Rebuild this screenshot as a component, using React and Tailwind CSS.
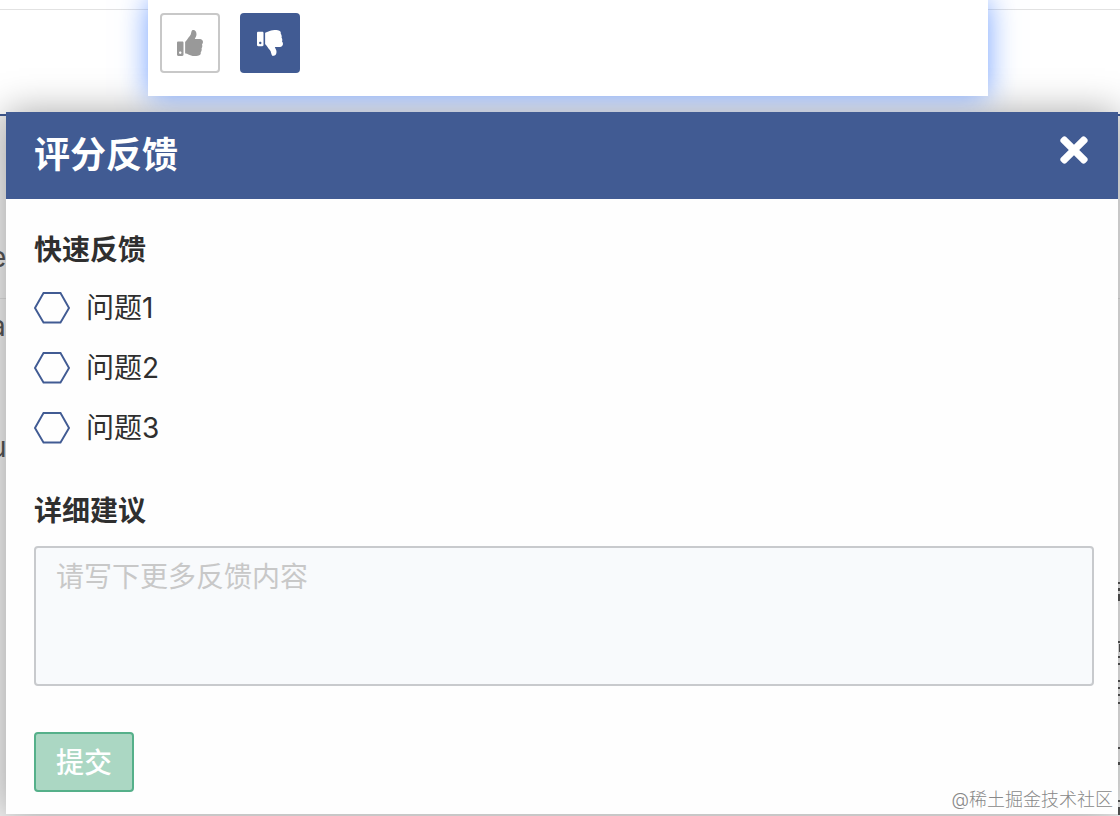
import React, { useState } from 'react';
import { FaThumbsUp, FaThumbsDown, FaTimes } from 'react-icons/fa';

const questions = [
    { id: 'q1', label: '问题1' },
    { id: 'q2', label: '问题2' },
    { id: 'q3', label: '问题3' },
];

function RatingBar() {
    return (
        <section className="relative z-10 ml-[148px] mr-[132px] flex gap-5 bg-white pl-3 pt-[13px] pb-[23px] shadow-[0_0_28px_rgba(70,130,255,0.75)]">
            <button type="button" aria-label="赞" className="flex h-[60px] w-[60px] items-center justify-center rounded border-2 border-[#c8c8c8] bg-white text-[#999]">
                <FaThumbsUp className="h-[26px] w-[26px]" />
            </button>
            <button type="button" aria-label="踩" className="flex h-[60px] w-[60px] items-center justify-center rounded bg-[#415b93] text-white">
                <FaThumbsDown className="h-[26px] w-[26px]" />
            </button>
        </section>
    );
}

function HexOption({ id, label }) {
    return (
        <label htmlFor={id} className="relative flex cursor-pointer items-center gap-4 leading-10">
            <input id={id} type="checkbox" className="peer absolute h-9 w-9 cursor-pointer opacity-0" />
            <svg viewBox="0 0 36 32" className="h-8 w-9 fill-none stroke-[#415b93] peer-checked:fill-[#415b93]">
                <path d="M9.5 1h17L35 16l-8.5 14.5h-17L1 16z" strokeWidth="1.9" />
            </svg>
            <span>{label}</span>
        </label>
    );
}

function FeedbackDialog() {
    const [detail, setDetail] = useState('');

    return (
        <section role="dialog" aria-labelledby="dialog-title" className="ml-1.5 mr-0.5 bg-[#fefefe] shadow-[0_0_36px_rgba(0,0,0,0.35)]">
            <header className="relative z-20 flex items-start justify-between bg-[#415b93] px-7 pt-[19px] pb-5 text-white">
                <h1 id="dialog-title" className="text-4xl leading-[48px] font-bold">评分反馈</h1>
                <button type="button" aria-label="关闭" className="-mt-px flex h-10 w-8 items-center justify-center">
                    <FaTimes className="h-10 w-7" />
                </button>
            </header>
            <form className="pl-7 pr-6 pt-[31px] pb-[22px] text-[28px] text-[#2f2f2f]" onSubmit={(e) => e.preventDefault()}>
                <h2 className="leading-10 font-bold">快速反馈</h2>
                <div className="mt-[18px] flex flex-col gap-5">
                    {questions.map(q => (
                        <HexOption key={q.id} id={q.id} label={q.label} />
                    ))}
                </div>
                <label htmlFor="detail" className="mt-[43px] block leading-10 font-bold">详细建议</label>
                <textarea
                    id="detail"
                    value={detail}
                    onChange={(e) => setDetail(e.target.value)}
                    placeholder="请写下更多反馈内容"
                    className="mt-[15px] block h-[140px] w-full resize-none rounded border-2 border-[#c8cacd] bg-[#f8fafc] px-5 py-[9px] leading-10 placeholder:text-[#c8c8c8]"
                />
                <button type="submit" className="mt-[46px] block h-[60px] rounded border-2 border-[#55b08a] bg-[#abd7c3] px-5 pt-0.5 leading-10 font-medium text-white">
                    提交
                </button>
            </form>
        </section>
    );
}

export default function App() {
    return (
        <div className="relative isolate min-h-screen overflow-hidden bg-white font-['Inter','Noto_Sans_CJK_SC',sans-serif]">
            {/* page behind the dialog */}
            <div aria-hidden="true" className="absolute inset-0 -z-10 bg-white text-[28px] leading-10 text-[#555]">
                <div className="absolute inset-x-0 top-[116px] bottom-0 bg-[#f0f0f0]" />
                <div className="absolute top-[9px] h-px w-full bg-[#e2e2e2]" />
                <div className="absolute top-[114px] h-0.5 w-full bg-[#415b93]" />
                <div className="absolute top-[298px] h-px w-full bg-[#ddd]" />
                <span className="absolute top-[237px] -left-2.5">e</span>
                <span className="absolute top-[306px] -left-2.5">a</span>
                <span className="absolute top-[427px] -left-2.5">u</span>
                {/* edge strokes of the text column on the right */}
                <svg className="absolute top-[580px] right-0 h-[236px] w-0.5 fill-[#555]" viewBox="0 0 2 236">
                    <path d="M0 2h2v2H0zM0 8h2v3H0zM0 14h2v7H0zM0 61h2v2H0zM1 64h1v8H1zM0 76h2v2H0zM0 83h2v2H0zM0 100h2v2H0zM0 107h2v2H0zM0 114h2v2H0zM0 122h2v2H0zM0 167h2v2H0zM0 182h2v3H0zM0 220h2v2H0zM0 227h2v8H0z" />
                </svg>
            </div>
            <RatingBar />
            <div className="mt-4">
                <FeedbackDialog />
            </div>
            <p className="absolute right-[7px] bottom-1 z-30 text-lg leading-6 font-light text-[#888]">@稀土掘金技术社区</p>
        </div>
    );
}
